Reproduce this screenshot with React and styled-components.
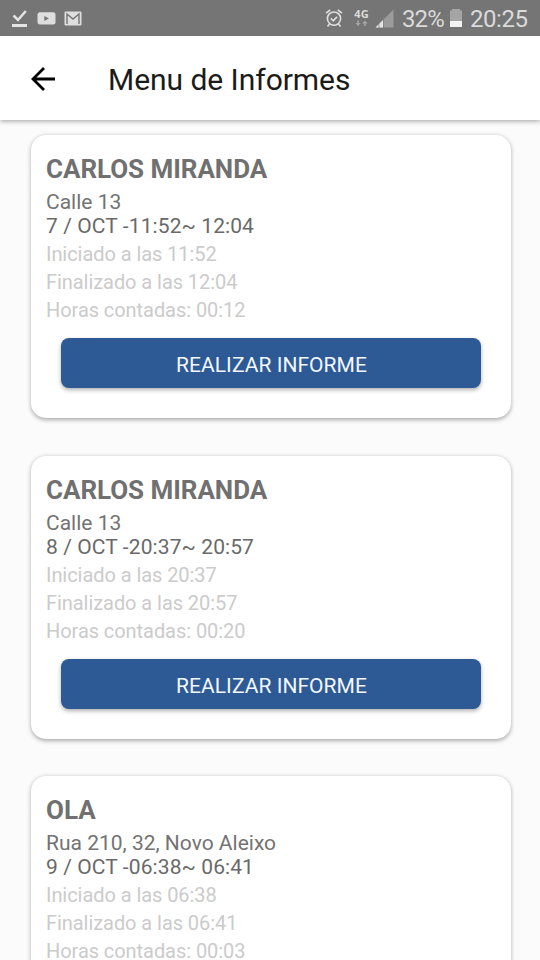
import React from "react";
import styled, { createGlobalStyle } from "styled-components";

const GlobalStyle = createGlobalStyle`
  *, *::before, *::after { box-sizing: border-box; }
  body { margin: 0; background: #fbfbfb; overflow: hidden; }
`;

const Screen = styled.div`
  width: 540px;
  height: 960px;
  display: flex;
  flex-direction: column;
  overflow: hidden;
  background: #fbfbfb;
  font-family: Roboto, sans-serif;
`;

const StatusBar = styled.header`
  flex: none;
  height: 36px;
  display: flex;
  align-items: center;
  justify-content: space-between;
  padding: 0 12px 0 11px;
  background: #757575;
  color: #dadada;
`;

const StatusGroup = styled.div`
  display: flex;
  align-items: center;
  height: 36px;
`;

const StatusIcon = styled.svg`
  display: block;
  flex: none;
  margin-right: ${(p) => p.$gap || 0}px;
`;

const StatusText = styled.span`
  font-size: 24px;
  line-height: 36px;
  letter-spacing: ${(p) => p.$tracking}px;
  width: ${(p) => p.$width}px;
  margin-right: ${(p) => p.$gap || 0}px;
  padding-top: 2px;
  white-space: nowrap;
`;

const Network = styled.div`
  width: 17px;
  margin-right: 5px;
  padding-bottom: 1px;
  display: flex;
  flex-direction: column;
  align-items: center;
`;

const NetworkLabel = styled.span`
  font: 700 11px/10px "Noto Sans", sans-serif;
`;

const AppBar = styled.nav`
  flex: none;
  position: relative;
  height: 84px;
  display: flex;
  align-items: center;
  padding: 1px 31px 0;
  background: #fff;
  box-shadow: 0 1px 5px rgba(0, 0, 0, 0.38);
  clip-path: inset(0 0 -10px 0);
`;

const BackButton = styled.button`
  width: 77px;
  height: 48px;
  padding: 0;
  border: 0;
  background: none;
  display: flex;
  align-items: center;
`;

const Title = styled.h1`
  margin: 2px 0 0;
  font-size: 30px;
  line-height: 36px;
  letter-spacing: -0.04px;
  font-weight: 400;
  color: #1b1b1b;
  white-space: nowrap;
`;

const List = styled.main`
  flex: 1;
  min-height: 0;
  overflow: hidden;
  display: flex;
  flex-direction: column;
  gap: 37.7px;
  padding: 15px 29px 0 31px;
`;

const Card = styled.article`
  flex: none;
  height: 283px;
  padding: 19px 30px 30px 15px;
  border-radius: 15px;
  background: #fff;
  box-shadow: 0 1.5px 4px rgba(0, 0, 0, 0.32);
`;

const Name = styled.h2`
  margin: 0 0 6px;
  font-size: 26px;
  line-height: 30px;
  font-weight: 700;
  letter-spacing: -0.04px;
  color: #707070;
`;

const Line = styled.p`
  margin: 0;
  font-size: 21px;
  line-height: 24px;
  letter-spacing: ${(p) => p.$tracking || 0}px;
  color: ${(p) => p.$color};
`;

const Details = styled.div`
  margin: 2px 0 14px;
`;

const Detail = styled.p`
  margin: 0;
  font-size: 20px;
  line-height: 28px;
  letter-spacing: -0.06px;
  color: #cbcbcb;
`;

const ReportButton = styled.button`
  display: block;
  width: 420px;
  height: 50px;
  margin: 0 0 0 15px;
  padding: 4px 0 0 1px;
  border: 0;
  border-radius: 8px;
  background: #2d5995;
  box-shadow: 0 2px 4px rgba(0, 0, 0, 0.32);
  color: #f2f8ff;
  font: 400 21px/24px Roboto, sans-serif;
  letter-spacing: 0.05px;
`;

const reports = [
  { name: "CARLOS MIRANDA", address: "Calle 13", day: "7 / OCT", start: "11:52", end: "12:04", total: "00:12" },
  { name: "CARLOS MIRANDA", address: "Calle 13", day: "8 / OCT", start: "20:37", end: "20:57", total: "00:20" },
  { name: "OLA", address: "Rua 210, 32, Novo Aleixo", day: "9 / OCT", start: "06:38", end: "06:41", total: "00:03" },
];

function ReportCard({ report }) {
  return (
    <Card>
      <Name>{report.name}</Name>
      <Line $color="#737373">{report.address}</Line>
      <Line $color="#696969" $tracking={0.1}>{`${report.day} -${report.start}~ ${report.end}`}</Line>
      <Details>
        <Detail>{`Iniciado a las ${report.start}`}</Detail>
        <Detail>{`Finalizado a las ${report.end}`}</Detail>
        <Detail>{`Horas contadas: ${report.total}`}</Detail>
      </Details>
      <ReportButton>REALIZAR INFORME</ReportButton>
    </Card>
  );
}

export default function App() {
  return (
    <Screen>
      <GlobalStyle />
      <StatusBar>
        <StatusGroup>
          <StatusIcon width="17" height="18" viewBox="0 0 17 18" $gap={9}>
            <path d="M2.5 6.5 7 11 14.8 2" fill="none" stroke="#e4e4e4" strokeWidth="2.5" />
            <path d="M1 15h15v3H1z" fill="#e4e4e4" />
          </StatusIcon>
          <StatusIcon width="19" height="13" viewBox="0 0 19 13" $gap={8}>
            <rect x="0.5" y="0.3" width="18" height="12.2" rx="2.5" fill="#dedede" />
            <path d="M7.3 4v5l4.6-2.5z" fill="#757575" />
          </StatusIcon>
          <StatusIcon width="18" height="15" viewBox="0 0 18 15">
            <rect x="0.5" y="0.5" width="17" height="14" rx="1.3" fill="#dedede" />
            <path d="M3 13V3l6 5 6-5v10" fill="none" stroke="#757575" strokeWidth="1.4" />
          </StatusIcon>
        </StatusGroup>
        <StatusGroup>
          <StatusIcon width="18" height="20" viewBox="0 0 18 20" $gap={10}>
            <g fill="none" stroke="#dedede" strokeWidth="1.6">
              <circle cx="9" cy="10.6" r="6.6" />
              <path d="M5.8 10.4 8.2 12.8 12 8.9M1 5.2 5.2 2M17 5.2 12.8 2M4.5 16l-2 2.5M13.5 16l2 2.5" />
            </g>
          </StatusIcon>
          <Network>
            <NetworkLabel>4G</NetworkLabel>
            <StatusIcon width="13" height="8" viewBox="0 0 13 8">
              <path d="M2.3 1.5h1.6V4h1.8L3.1 7 .5 4h1.8zM9.1 7h1.6V4.5h1.8L9.9 1.5 7.3 4.5h1.8z" fill="#a6a6a6" />
            </StatusIcon>
          </Network>
          <StatusIcon width="19" height="19" viewBox="0 0 19 19" $gap={8}>
            <path d="M.5 18.5 18.5.5v18z" fill="#9b9b9b" />
            <path d="M.5 18.5 8 11v7.5z" fill="#e6e6e6" />
            <path d="M4 11v8M8.5 8v11" stroke="#808080" strokeWidth=".8" />
          </StatusIcon>
          <StatusText $width={42} $gap={6} $tracking={-0.9}>32%</StatusText>
          <StatusIcon width="12" height="18" viewBox="0 0 12 18" $gap={8}>
            <path d="M0 1.5h2V0h8v1.5h2V18H0z" fill="#a5a5a5" />
            <path d="M0 12h12v6H0z" fill="#f2f2f2" />
          </StatusIcon>
          <StatusText $width={58} $tracking={-0.45}>20:25</StatusText>
        </StatusGroup>
      </StatusBar>
      <AppBar>
        <BackButton aria-label="Volver">
          <svg width="24" height="24" viewBox="0 0 24 24">
            <path d="M24 12H2M13 1 2 12l11 11" fill="none" stroke="#000" strokeWidth="2.8" />
          </svg>
        </BackButton>
        <Title>Menu de Informes</Title>
      </AppBar>
      <List>
        {reports.map((report) => (
          <ReportCard key={report.day} report={report} />
        ))}
      </List>
    </Screen>
  );
}
